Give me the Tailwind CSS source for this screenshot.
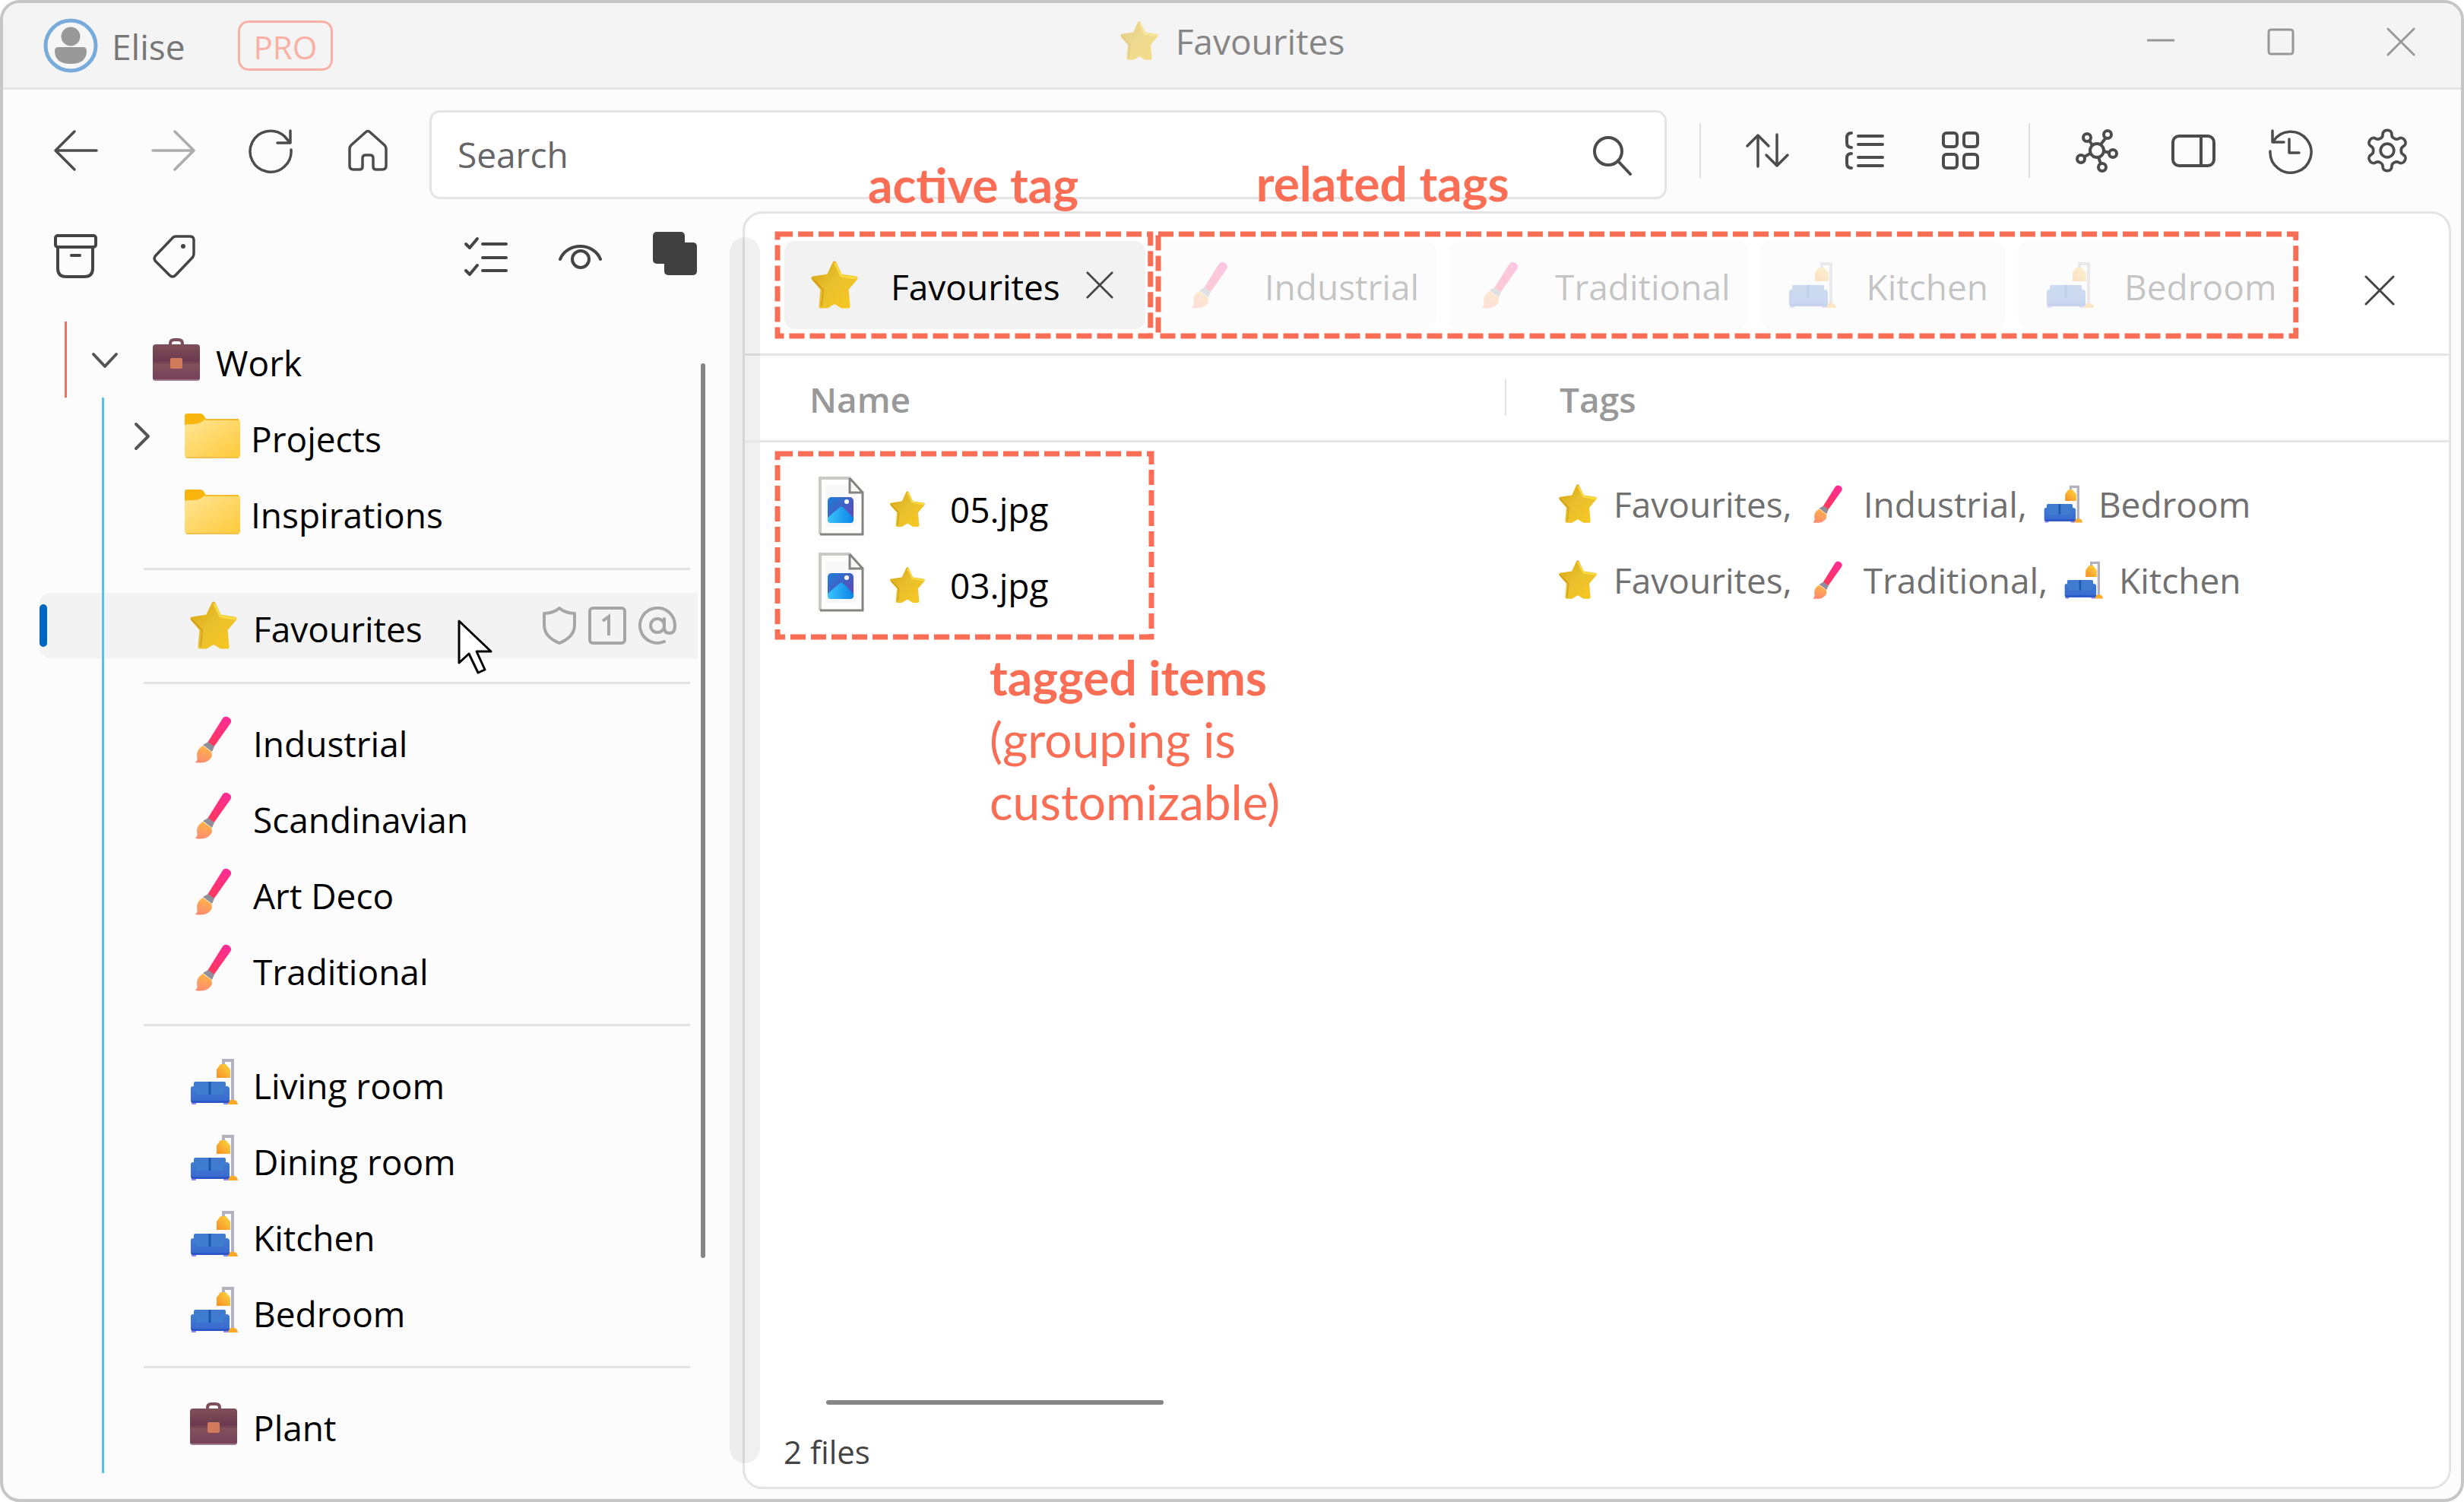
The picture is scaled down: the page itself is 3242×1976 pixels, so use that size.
<!DOCTYPE html>
<html lang="en">
<head>
<meta charset="utf-8">
<title>Favourites</title>
<script src="https://cdn.jsdelivr.net/npm/@tailwindcss/browser@4"></script>
</head>
<body class="bg-white font-['Open_Sans','Noto_Sans',sans-serif] text-[46px] leading-[64px] text-black">

<svg class="absolute h-0 w-0" aria-hidden="true">
  <defs>
    <linearGradient id="gStar" x1="0" y1="0" x2="1" y2="1"><stop offset="0" stop-color="#d9a514"/><stop offset=".45" stop-color="#e8c02e"/><stop offset="1" stop-color="#f9c81f"/></linearGradient>
    <linearGradient id="gHandle" x1="1" y1="0" x2="0" y2="1"><stop offset="0" stop-color="#ff2a9d"/><stop offset="1" stop-color="#ff3a54"/></linearGradient>
    <linearGradient id="gTip" x1=".6" y1="0" x2=".3" y2="1"><stop offset="0" stop-color="#ffb447"/><stop offset="1" stop-color="#ff8a70"/></linearGradient>
    <linearGradient id="gSofa" x1="0" y1="0" x2="0" y2="1"><stop offset="0" stop-color="#3f7cd0"/><stop offset="1" stop-color="#3a68d0"/></linearGradient>
    <linearGradient id="gShade" x1="0" y1="1" x2="1" y2="0"><stop offset="0" stop-color="#f58d23"/><stop offset="1" stop-color="#ffd840"/></linearGradient>
    <linearGradient id="gFolder" x1="0" y1="0" x2="1" y2="1"><stop offset="0" stop-color="#ffe596"/><stop offset="1" stop-color="#ffca3a"/></linearGradient>
    <linearGradient id="gCase" x1="0" y1="0" x2="0" y2="1"><stop offset="0" stop-color="#7f5058"/><stop offset=".45" stop-color="#6b3a50"/><stop offset=".55" stop-color="#83505c"/><stop offset="1" stop-color="#74405a"/></linearGradient>
    <linearGradient id="gSky" x1="0" y1="0" x2="1" y2="1"><stop offset="0" stop-color="#1c7fd8"/><stop offset="1" stop-color="#6b3fb0"/></linearGradient>
    <linearGradient id="gHill" x1="0" y1="0" x2="1" y2="0"><stop offset="0" stop-color="#3cc4fb"/><stop offset="1" stop-color="#0a84e8"/></linearGradient>
  </defs>
  <symbol id="star" viewBox="0 0 64 64">
    <path d="M32 3 L40 20 L60 23 L48 37 L50 60 L42 60 L32 54 L22 60 L14 60 L16 37 L4 23 L24 20 Z" fill="url(#gStar)" stroke="url(#gStar)" stroke-width="5" stroke-linejoin="round"/>
    <path d="M33 4 L41 20 L60 23" fill="none" stroke="#ffe14a" stroke-width="3" stroke-linejoin="round" stroke-linecap="round" opacity=".8"/>
    <path d="M4 25 L17 38 L15 59" fill="none" stroke="#c98f14" stroke-width="2" stroke-linejoin="round" stroke-linecap="round" opacity=".6"/>
  </symbol>
  <symbol id="brush" viewBox="0 0 64 64">
    <g transform="translate(-2 0)">
      <path d="M46 4q3-4 8-1t2 8L34 42 26 36Z" fill="url(#gHandle)"/>
      <path d="M27 35 35 41 32 48 20 39Z" fill="#8f8e99"/>
      <path d="M20 40 31 48q3 6-3 11-6 5-18 3 4-4 2-9 0-9 8-13Z" fill="url(#gTip)"/>
    </g>
  </symbol>
  <symbol id="sofa" viewBox="0 0 64 64">
    <path d="M45 10V4H57V58" fill="none" stroke="#b3b1bd" stroke-width="4"/>
    <path d="M41 9h7l6 7v11H36V16Z" fill="url(#gShade)"/>
    <path d="M49 62q1-6 6-6h4q4 0 5 6Z" fill="#fbaa2a"/>
    <path d="M3 56h6v6H3ZM45 56h6v6h-6Z" fill="#9a88f5"/>
    <path d="M6 34q0-2 2-2H46q2 0 2 2V50H6Z" fill="#3f7ccf"/>
    <path d="M2 41q0-3 3-3t4 4v7H45V42q0-4 4-4t4 4V57q0 3-3 3H5q-3 0-3-3Z" fill="url(#gSofa)"/>
    <path d="M27 32V49" stroke="#1d55ae" stroke-width="3"/>
    <path d="M3 57H52v1q0 2-2 2H5q-2 0-2-2Z" fill="#2b56c8"/>
  </symbol>
  <symbol id="case" viewBox="0 0 64 64">
    <path d="M24 14V11q0-5 5-5h6q5 0 5 5v3" fill="none" stroke="#7c4f58" stroke-width="4"/>
    <rect x="1" y="12" width="62" height="48" rx="4" fill="url(#gCase)"/>
    <path d="M2 59H62" stroke="#b9a0ac" stroke-width="2" opacity=".6"/>
    <rect x="24" y="30" width="16" height="14" rx="2" fill="#d27b5c"/>
  </symbol>
  <symbol id="folder" viewBox="0 0 74 60">
    <path d="M1 4q0-3 3-3H21q4 0 6 4l3 5V16H1Z" fill="#fbb50f"/>
    <path d="M1 16q2-1 12-1 10-1 14-6H71q3 0 3 3V56q0 3-3 3H4q-3 0-3-3Z" fill="url(#gFolder)"/>
    <path d="M28 9H72" stroke="#f5b92c" stroke-width="2"/>
    <path d="M3 59H72" stroke="#f0c050" stroke-width="2"/>
  </symbol>
  <symbol id="photo" viewBox="0 0 60 80">
    <path d="M2 3H42L58 22V77H2Z" fill="#fff"/>
    <rect x="9" y="12" width="41" height="55" fill="#f8f8f8"/>
    <path d="M2 77V3H42" fill="none" stroke="#c9c9c5" stroke-width="4"/>
    <path d="M41 3V22H58V77H2M41 3 58 22" fill="none" stroke="#848480" stroke-width="3"/>
    <rect x="12" y="28" width="34" height="34" rx="5" fill="url(#gSky)"/>
    <path d="M12 55 27 42q3-3 6 0L46 55v3q0 4-4 4H16q-4 0-4-4Z" fill="url(#gHill)"/>
    <circle cx="37" cy="34" r="3" fill="#fff"/>
  </symbol>
  <symbol id="cross" viewBox="0 0 40 40">
    <path d="M2 2 38 38M38 2 2 38" fill="none" stroke="currentColor" stroke-width="3" stroke-linecap="round"/>
  </symbol>
</svg>

<div class="flex min-h-screen flex-col overflow-hidden rounded-[26px] border-4 border-[#c6c6c6] bg-[#fcfcfc]">

  <!-- Title bar -->
  <header class="grid h-[114px] grid-cols-[1fr_auto_1fr] items-stretch border-b-3 border-[#e4e4e4] bg-[#f4f4f4]">
    <div class="flex items-center pl-[53px] text-[#777]">
      <svg class="h-[72px] w-[72px]" viewBox="0 0 72 72"><circle cx="36" cy="36" r="33" fill="#f6f6f6" stroke="#76abdc" stroke-width="5"/><circle cx="36" cy="24" r="12.500" fill="#999"/><path d="M15 43q0-5 5-5H52q5 0 5 5 0 17-21 17T15 43Z" fill="#999"/></svg>
      <span class="ml-[18px] pt-[3px]">Elise</span>
      <span class="ml-[69px] flex h-[66px] items-center rounded-[14px] border-3 border-[#f9b1a5] px-[18px] pt-1 text-[42px] text-[#f9b1a5]">PRO</span>
    </div>
    <h1 class="flex items-center gap-[22px] pb-3 text-[#868686]"><svg class="h-[52px] w-[52px] opacity-50"><use href="#star"/></svg>Favourites</h1>
    <div class="flex justify-end pb-[9px] text-[#979797]">
      <button class="flex w-[158px] items-center justify-center" aria-label="Minimize"><svg class="h-10 w-10" viewBox="0 0 40 40"><path d="M2 18H38" stroke="currentColor" stroke-width="3"/></svg></button>
      <button class="flex w-[158px] items-center justify-center" aria-label="Maximize"><svg class="h-10 w-10" viewBox="0 0 40 40"><rect x="4" y="4" width="32" height="32" rx="3" fill="none" stroke="currentColor" stroke-width="3"/></svg></button>
      <button class="flex w-[158px] items-center justify-center" aria-label="Close window"><svg class="h-[38px] w-[38px]"><use href="#cross"/></svg></button>
    </div>
  </header>

  <!-- Toolbar -->
  <nav class="flex h-40 items-center pr-[34px] pl-8 text-[#4c4c4c]">
    <button class="flex w-[128px] justify-center" aria-label="Back"><svg class="h-16 w-16" viewBox="0 0 64 64" fill="none" stroke="currentColor" stroke-width="3.500" stroke-linecap="round" stroke-linejoin="round"><path d="M59 32H6M30 7 5 32 30 57"/></svg></button>
    <button class="flex w-[128px] justify-center text-[#ababab]" aria-label="Forward"><svg class="h-16 w-16" viewBox="0 0 64 64" fill="none" stroke="currentColor" stroke-width="3.500" stroke-linecap="round" stroke-linejoin="round"><path d="M5 32H58M34 7 59 32 34 57"/></svg></button>
    <button class="flex w-[128px] justify-center" aria-label="Refresh"><svg class="h-16 w-16" viewBox="0 0 64 64" fill="none" stroke="currentColor" stroke-width="3.500" stroke-linecap="round" stroke-linejoin="round"><path d="M59 31A27 27 0 1 1 50 13L57 21M58 6V22H41"/></svg></button>
    <button class="flex w-[128px] justify-center" aria-label="Home"><svg class="h-16 w-16" viewBox="0 0 64 64" fill="none" stroke="currentColor" stroke-width="3.500" stroke-linejoin="round"><path d="M8 30q0-3 2-5L29 8q3-3 6 0L54 25q2 2 2 5V52q0 5-5 5H43q-4 0-4-4V42q0-4-4-4H29q-4 0-4 4V53q0 4-4 4H13q-5 0-5-5Z"/></svg></button>
    <label class="mt-2.5 ml-[17px] flex h-[117px] flex-1 items-center rounded-[14px] border-3 border-[#e4e4e4] bg-white pr-[41px] pl-[34px]">
      <input class="min-w-0 flex-1 bg-transparent outline-none placeholder:text-[#666]" type="text" placeholder="Search" aria-label="Search">
      <svg class="h-14 w-14" viewBox="0 0 56 56" fill="none" stroke="currentColor" stroke-width="4" stroke-linecap="round"><circle cx="23" cy="24" r="18"/><path d="M36 37 52 54"/></svg>
    </label>
    <div class="ml-[43px] h-[72px] w-0.5 bg-[#dedede]"></div>
    <button class="ml-[25px] flex w-[127px] justify-center" aria-label="Sort"><svg class="h-16 w-16" viewBox="0 0 64 64" fill="none" stroke="currentColor" stroke-width="3.500" stroke-linecap="round" stroke-linejoin="round"><path d="M18 53V12M4 26 18 12 32 26M43 11V52M29 38 43 52 57 38"/></svg></button>
    <button class="flex w-[127px] justify-center" aria-label="Group"><svg class="h-16 w-16" viewBox="0 0 64 64" fill="none" stroke="currentColor" stroke-width="4" stroke-linecap="round"><path d="M23 13H55M23 24H55M23 41H55M23 52H55M14 9q-6 0-6 6v7q0 6 6 6M14 36q-6 0-6 6v7q0 6 6 6"/></svg></button>
    <button class="flex w-[127px] justify-center" aria-label="View"><svg class="h-16 w-16" viewBox="0 0 64 64" fill="none" stroke="currentColor" stroke-width="4"><rect x="8" y="9" width="18" height="18" rx="4"/><rect x="35" y="9" width="18" height="18" rx="4"/><rect x="8" y="37" width="18" height="18" rx="4"/><rect x="35" y="37" width="18" height="18" rx="4"/></svg></button>
    <div class="ml-[25px] h-[72px] w-0.5 bg-[#dedede]"></div>
    <button class="ml-[25px] flex w-[127px] justify-center" aria-label="Graph"><svg class="h-16 w-16" viewBox="0 0 64 64" fill="none" stroke="currentColor" stroke-width="4"><circle cx="31" cy="32" r="9"/><circle cx="18" cy="15" r="5"/><circle cx="45" cy="11" r="5"/><circle cx="52" cy="36" r="5"/><circle cx="38" cy="54" r="5"/><circle cx="10" cy="43" r="5"/><path d="M21 19 25 25M43 15 36 24M48 35 40 33M36 49 33 41M15 40 22 36"/></svg></button>
    <button class="flex w-[127px] justify-center" aria-label="Side panel"><svg class="h-16 w-16" viewBox="0 0 64 64" fill="none" stroke="currentColor" stroke-width="4"><rect x="4" y="13" width="54" height="39" rx="8"/><path d="M41 13V52"/></svg></button>
    <button class="flex w-[127px] justify-center" aria-label="History"><svg class="h-16 w-16" viewBox="0 0 64 64" fill="none" stroke="currentColor" stroke-width="3.500" stroke-linecap="round" stroke-linejoin="round"><path d="M8 6V21H23M9 20A27 27 0 1 1 5 33M30 17V35H43"/></svg></button>
    <button class="flex w-[127px] justify-center" aria-label="Settings"><svg class="h-16 w-16" viewBox="0 0 24 24" fill="none" stroke="currentColor" stroke-width="1.400" stroke-linejoin="round"><path d="M12.220 2h-.44a2 2 0 0 0-2 2v.18a2 2 0 0 1-1 1.730l-.43.25a2 2 0 0 1-2 0l-.15-.08a2 2 0 0 0-2.730.73l-.22.38a2 2 0 0 0 .73 2.730l.15.1a2 2 0 0 1 1 1.720v.51a2 2 0 0 1-1 1.740l-.15.09a2 2 0 0 0-.73 2.730l.22.38a2 2 0 0 0 2.730.73l.15-.08a2 2 0 0 1 2 0l.43.25a2 2 0 0 1 1 1.730V20a2 2 0 0 0 2 2h.44a2 2 0 0 0 2-2v-.18a2 2 0 0 1 1-1.730l.43-.25a2 2 0 0 1 2 0l.15.08a2 2 0 0 0 2.730-.73l.22-.39a2 2 0 0 0-.73-2.730l-.15-.08a2 2 0 0 1-1-1.740v-.5a2 2 0 0 1 1-1.740l.15-.09a2 2 0 0 0 .73-2.730l-.22-.38a2 2 0 0 0-2.730-.73l-.15.08a2 2 0 0 1-2 0l-.43-.25a2 2 0 0 1-1-1.730V4a2 2 0 0 0-2-2z"/><circle cx="12" cy="12" r="3.300"/></svg></button>
  </nav>

  <div class="flex flex-1">

    <!-- Sidebar -->
    <aside class="flex w-[973px] shrink-0 flex-col pb-[34px]">
      <div class="flex h-[118px] items-center pr-[27px] pl-8 text-[#444]">
        <button class="flex w-[128px] justify-center" aria-label="Archive"><svg class="h-16 w-16" viewBox="0 0 64 64" fill="none" stroke="currentColor" stroke-width="4" stroke-linecap="round"><rect x="5" y="5" width="53" height="15" rx="3"/><path d="M8 20V48q0 11 11 11H43q11 0 11-11V20M26 31H37"/></svg></button>
        <button class="flex w-[128px] justify-center" aria-label="Tags"><svg class="h-16 w-16" viewBox="0 0 64 64" fill="none" stroke="currentColor" stroke-width="3.500" stroke-linejoin="round"><path d="M32 7q1-1 3-1H54q5 0 5 5V29q0 3-2 5L35 57q-4 4-8 0L9 39q-4-4 0-8Z"/><circle cx="45" cy="19" r="3" fill="currentColor" stroke="none"/></svg></button>
        <button class="ml-auto flex w-[124px] justify-center" aria-label="Select"><svg class="h-16 w-16" viewBox="0 0 64 64" fill="none" stroke="currentColor" stroke-width="4" stroke-linecap="round" stroke-linejoin="round"><path d="M27 16H58M27 34H58M27 51H58M5 16 10 21 20 9M5 51 10 56 20 44"/></svg></button>
        <button class="flex w-[124px] justify-center" aria-label="Preview"><svg class="h-16 w-16" viewBox="0 0 64 64" fill="none" stroke="currentColor" stroke-width="4" stroke-linecap="round"><path d="M5 36A28 25 0 0 1 58 36"/><circle cx="32" cy="36" r="11"/></svg></button>
        <button class="flex w-[124px] justify-center" aria-label="Copy"><svg class="h-16 w-16" viewBox="0 0 64 64" fill="#404040"><rect x="3" y="0" width="42" height="42" rx="5"/><rect x="18" y="14" width="43" height="43" rx="5"/></svg></button>
      </div>

      <div class="flex pt-[27px] pl-12">
        <div class="w-[866px]">
          <div class="relative flex h-[100px] items-center pl-[66px]">
            <span class="absolute inset-y-0 left-[33px] w-[3px] bg-[#f4705c]"></span>
            <svg class="h-10 w-10 text-[#555]" viewBox="0 0 40 40"><path d="M5 13 20 29 35 13" fill="none" stroke="currentColor" stroke-width="4" stroke-linecap="round" stroke-linejoin="round"/></svg>
            <svg class="ml-[42px] h-16 w-16"><use href="#case"/></svg>
            <a href="#work" class="ml-5 pt-2">Work</a>
          </div>

          <ul class="relative pb-[15px]">
            <li class="flex h-[100px] items-center pl-[115px]">
              <svg class="h-10 w-10 text-[#555]" viewBox="0 0 40 40"><path d="M12 5 28 21 12 37" fill="none" stroke="currentColor" stroke-width="4" stroke-linecap="round" stroke-linejoin="round"/></svg>
              <svg class="ml-[35px] h-[60px] w-[74px]"><use href="#folder"/></svg>
              <a href="#projects" class="ml-3.5 pt-2">Projects</a>
            </li>
            <li class="flex h-[100px] items-center pl-[190px]">
              <svg class="h-[60px] w-[74px]"><use href="#folder"/></svg>
              <a href="#inspirations" class="ml-3.5 pt-2">Inspirations</a>
            </li>
            <li class="mr-2.5 ml-[137px] flex h-[50px] items-center"><hr class="w-full border-t-3 border-[#e3e3e3]"></li>
            <li class="my-[7px] flex h-[86px] items-center rounded-l-[14px] bg-[#f3f3f3] pr-7">
              <span class="h-[56px] w-2.5 rounded-full bg-[#0067c0]"></span>
              <svg class="ml-[187px] h-16 w-16"><use href="#star"/></svg>
              <a href="#favourites" class="ml-5 pt-2">Favourites</a>
              <span class="ml-auto flex gap-4 text-[#a6a6a6]">
                <svg class="h-[50px] w-[44px]" viewBox="0 0 44 50" fill="none" stroke="currentColor" stroke-width="4" stroke-linejoin="round"><path d="M22 2q8 7 20 7V24Q42 40 22 48 2 40 2 24V9Q14 9 22 2Z"/></svg>
                <svg class="h-[50px] w-[50px]" viewBox="0 0 50 50" fill="none" stroke="currentColor" stroke-width="4"><rect x="2" y="2" width="46" height="46" rx="4"/><path d="M19 19 27 13V38"/></svg>
                <svg class="h-[50px] w-[50px]" viewBox="0 0 50 50" fill="none" stroke="currentColor" stroke-width="4" stroke-linecap="round"><circle cx="25" cy="25" r="9"/><path d="M34 16V28q0 7 7 7t7-10A23 23 0 1 0 34 46"/></svg>
              </span>
            </li>
            <li class="mr-2.5 ml-[137px] flex h-[50px] items-center"><hr class="w-full border-t-3 border-[#e3e3e3]"></li>
            <li class="flex h-[100px] items-center gap-5 pl-[197px]"><svg class="h-16 w-16"><use href="#brush"/></svg><a href="#industrial" class="pt-2.5">Industrial</a></li>
            <li class="flex h-[100px] items-center gap-5 pl-[197px]"><svg class="h-16 w-16"><use href="#brush"/></svg><a href="#scandinavian" class="pt-2.5">Scandinavian</a></li>
            <li class="flex h-[100px] items-center gap-5 pl-[197px]"><svg class="h-16 w-16"><use href="#brush"/></svg><a href="#artdeco" class="pt-2.5">Art Deco</a></li>
            <li class="flex h-[100px] items-center gap-5 pl-[197px]"><svg class="h-16 w-16"><use href="#brush"/></svg><a href="#traditional" class="pt-2.5">Traditional</a></li>
            <li class="mr-2.5 ml-[137px] flex h-[50px] items-center"><hr class="w-full border-t-3 border-[#e3e3e3]"></li>
            <li class="flex h-[100px] items-center gap-5 pl-[197px]"><svg class="h-16 w-16"><use href="#sofa"/></svg><a href="#living" class="pt-2.5">Living room</a></li>
            <li class="flex h-[100px] items-center gap-5 pl-[197px]"><svg class="h-16 w-16"><use href="#sofa"/></svg><a href="#dining" class="pt-2.5">Dining room</a></li>
            <li class="flex h-[100px] items-center gap-5 pl-[197px]"><svg class="h-16 w-16"><use href="#sofa"/></svg><a href="#kitchen" class="pt-2.5">Kitchen</a></li>
            <li class="flex h-[100px] items-center gap-5 pl-[197px]"><svg class="h-16 w-16"><use href="#sofa"/></svg><a href="#bedroom" class="pt-2.5">Bedroom</a></li>
            <li class="mr-2.5 ml-[137px] flex h-[50px] items-center"><hr class="w-full border-t-3 border-[#e3e3e3]"></li>
            <li class="flex h-[100px] items-center gap-5 pl-[197px]"><svg class="h-16 w-16"><use href="#case"/></svg><a href="#plant" class="pt-2.5">Plant</a></li>
            <li class="absolute inset-y-0 left-[82px] w-[3px] bg-[#55c3f0]" aria-hidden="true"></li>
            <!-- Mouse pointer -->
            <li class="absolute top-[290px] left-[549px]" aria-hidden="true"><svg class="h-[76px] w-[50px]" viewBox="0 0 50 76"><path d="M3 4V59L16 47 28 72 37 68 26 44H45Z" fill="#fff" stroke="#000" stroke-width="3" stroke-linejoin="round"/></svg></li>
          </ul>
        </div>
        <div class="mt-[55px] ml-1 h-[1177px] w-1.5 rounded-full bg-[#858585]"></div>
      </div>
    </aside>

    <!-- Content panel -->
    <main class="relative mr-[13px] mb-[13px] flex flex-1 flex-col rounded-[26px] border-3 border-[#e4e4e4] bg-white">
      <div class="absolute top-[31px] bottom-[31px] -left-5 w-10 rounded-full bg-black/6"></div>

      <div class="flex items-center border-b-3 border-[#e6e6e6] pt-6 pr-[71px] pb-5 pl-10">
        <div class="relative p-3 pr-2.5">
          <svg class="pointer-events-none absolute inset-[3px] z-10 h-[calc(100%-6px)] w-[calc(100%-6px)] overflow-visible"><rect width="100%" height="100%" fill="none" stroke="#fa6e56" stroke-width="7" stroke-dasharray="20 7"/></svg>
          <span class="absolute -top-[94px] left-[122px] font-['Lato',sans-serif] text-[64px] leading-[64px] font-bold whitespace-nowrap text-[#fa6e56]">active tag</span>
          <div class="relative flex h-[116px] items-center rounded-[14px] bg-[#f2f2f2] pr-[42px] pl-[34px]">
            <svg class="h-16 w-16"><use href="#star"/></svg>
            <span class="ml-10.5 pt-1">Favourites</span>
            <button class="ml-[34px] text-[#444]" aria-label="Remove tag"><svg class="h-9 w-9"><use href="#cross"/></svg></button>
          </div>
        </div>
        <div class="relative ml-1 p-3 pr-[7px] pl-[3px]">
          <svg class="pointer-events-none absolute inset-[3px] z-10 h-[calc(100%-6px)] w-[calc(100%-6px)] overflow-visible"><rect width="100%" height="100%" fill="none" stroke="#fa6e56" stroke-width="7" stroke-dasharray="20 7"/></svg>
          <span class="absolute -top-[96px] left-[132px] font-['Lato',sans-serif] text-[64px] leading-[64px] font-bold whitespace-nowrap text-[#fa6e56]">related tags</span>
          <div class="relative flex gap-4 text-black/24">
            <button class="flex h-[116px] items-center gap-10 rounded-[14px] bg-[#fcfcfc] pr-[23px] pl-9"><svg class="h-16 w-16 opacity-25"><use href="#brush"/></svg><span class="pt-1">Industrial</span></button>
            <button class="flex h-[116px] items-center gap-10 rounded-[14px] bg-[#fcfcfc] pr-[23px] pl-9"><svg class="h-16 w-16 opacity-25"><use href="#brush"/></svg><span class="pt-1">Traditional</span></button>
            <button class="flex h-[116px] items-center gap-10 rounded-[14px] bg-[#fcfcfc] pr-[23px] pl-9"><svg class="h-16 w-16 opacity-25"><use href="#sofa"/></svg><span class="pt-1">Kitchen</span></button>
            <button class="flex h-[116px] items-center gap-10 rounded-[14px] bg-[#fcfcfc] pr-[21px] pl-9"><svg class="h-16 w-16 opacity-25"><use href="#sofa"/></svg><span class="pt-1">Bedroom</span></button>
          </div>
        </div>
        <button class="ml-auto pt-3.5 text-[#444]" aria-label="Close"><svg class="h-10 w-10"><use href="#cross"/></svg></button>
      </div>

      <div class="relative">
        <table class="w-full table-fixed border-collapse text-left">
          <thead>
            <tr class="h-[112px] border-b-3 border-[#e6e6e6] text-[#999]">
              <th class="w-[1002px] p-0 pl-[85px] font-semibold"><div class="flex h-12 items-center border-r-2 border-[#e2e2e2] pt-1">Name</div></th>
              <th class="p-0 pt-1 pl-[70px] font-semibold">Tags</th>
            </tr>
          </thead>
          <tbody class="before:block before:h-[34px]">
            <tr class="h-[100px]">
              <td class="p-0 pl-[97px]"><div class="flex items-center"><svg class="h-20 w-15"><use href="#photo"/></svg><span class="flex items-center pt-2"><svg class="mr-8 ml-[33px] h-12 w-12"><use href="#star"/></svg>05.jpg</span></div></td>
              <td class="p-0 pl-[68px] text-[#707070]"><div class="flex items-center gap-[21px] pb-1.5"><svg class="h-13 w-13"><use href="#star"/></svg>Favourites, <svg class="h-13 w-13"><use href="#brush"/></svg>Industrial, <svg class="h-13 w-13"><use href="#sofa"/></svg>Bedroom</div></td>
            </tr>
            <tr class="h-[100px]">
              <td class="p-0 pl-[97px]"><div class="flex items-center"><svg class="h-20 w-15"><use href="#photo"/></svg><span class="flex items-center pt-2"><svg class="mr-8 ml-[33px] h-12 w-12"><use href="#star"/></svg>03.jpg</span></div></td>
              <td class="p-0 pl-[68px] text-[#707070]"><div class="flex items-center gap-[21px] pb-1.5"><svg class="h-13 w-13"><use href="#star"/></svg>Favourites, <svg class="h-13 w-13"><use href="#brush"/></svg>Traditional, <svg class="h-13 w-13"><use href="#sofa"/></svg>Kitchen</div></td>
            </tr>
          </tbody>
        </table>
        <svg class="pointer-events-none absolute top-[129px] left-[43px] h-[241px] w-[492px] overflow-visible"><rect width="100%" height="100%" fill="none" stroke="#fa6e56" stroke-width="7" stroke-dasharray="20 7"/></svg>
        <p class="absolute top-[382px] left-[322px] font-['Lato',sans-serif] text-[64px] leading-[82px] whitespace-nowrap text-[#fa6e56]"><b class="font-bold">tagged items</b><br>(grouping is<br>customizable)</p>
      </div>

      <div class="mt-auto pb-3.5 pl-[51px]">
        <div class="ml-14 h-1.5 w-[444px] rounded-full bg-[#858585]"></div>
        <p class="mt-[30px] text-[42px] text-[#444]">2 files</p>
      </div>
    </main>
  </div>
</div>
</body>
</html>
